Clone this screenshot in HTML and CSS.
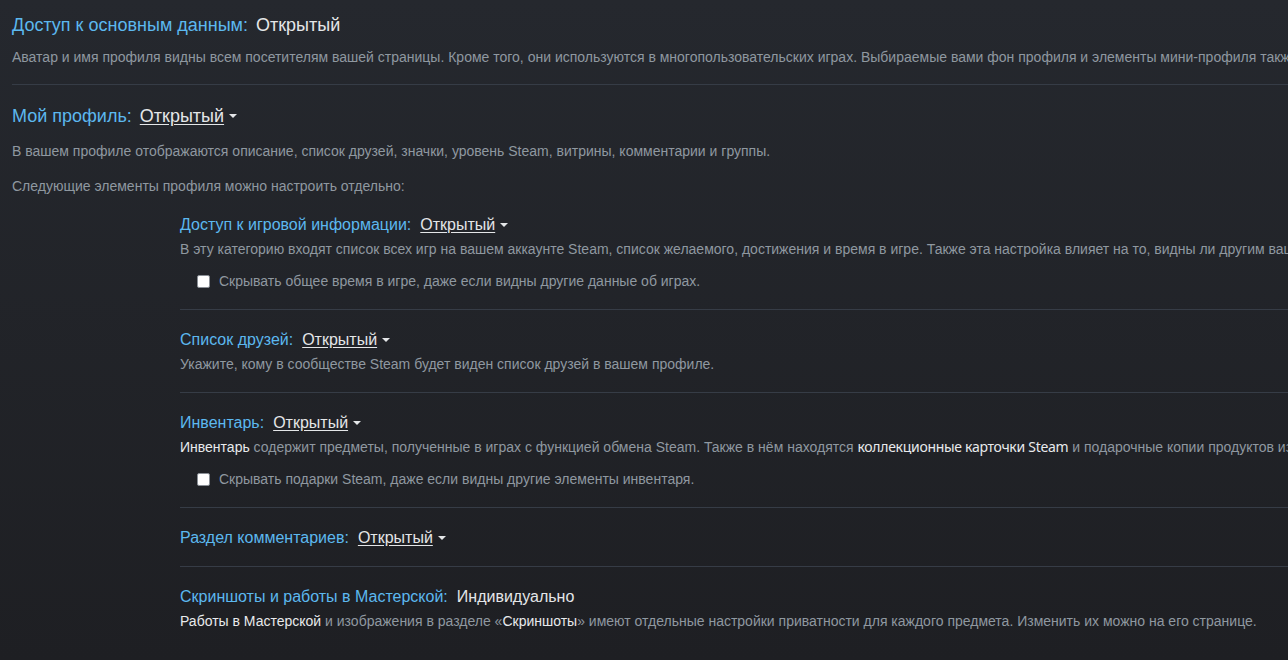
FILE: index.html
```html
<!DOCTYPE html>
<html lang="ru">
<head>
<meta charset="utf-8">
<link rel="stylesheet" href="styles.css">
</head>
<body>
<div class="page">
  <div class="block">
    <div class="title">Доступ к основным данным:<span class="value">Открытый</span></div>
    <div class="desc first">Аватар и имя профиля видны всем посетителям вашей страницы. Кроме того, они используются в многопользовательских играх. Выбираемые вами фон профиля и элементы мини-профиля также видны всем посетителям вашей страницы.</div>
  </div>
  <div class="block last">
    <div class="title">Мой профиль:<span class="link">Открытый</span><span class="arrow"></span></div>
    <div class="desc second">В вашем профиле отображаются описание, список друзей, значки, уровень Steam, витрины, комментарии и группы.</div>
    <div class="desc third">Следующие элементы профиля можно настроить отдельно:</div>
    <div class="subs">
      <div class="sub">
        <div class="subtitle">Доступ к игровой информации:<span class="link">Открытый</span><span class="arrow"></span></div>
        <div class="desc">В эту категорию входят список всех игр на вашем аккаунте Steam, список желаемого, достижения и время в игре. Также эта настройка влияет на то, видны ли другим ваши игровые достижения и статус в сети.</div>
        <label class="check"><span class="box"></span>Скрывать общее время в игре, даже если видны другие данные об играх.</label>
      </div>
      <div class="sub">
        <div class="subtitle">Список друзей:<span class="link">Открытый</span><span class="arrow"></span></div>
        <div class="desc">Укажите, кому в сообществе Steam будет виден список друзей в вашем профиле.</div>
      </div>
      <div class="sub">
        <div class="subtitle">Инвентарь:<span class="link">Открытый</span><span class="arrow"></span></div>
        <div class="desc"><span class="hl">Инвентарь</span> содержит предметы, полученные в играх с функцией обмена Steam. Также в нём находятся <span class="hl alt">коллекционные карточки Steam</span> и подарочные копии продуктов из магазина Steam.</div>
        <label class="check"><span class="box"></span>Скрывать подарки Steam, даже если видны другие элементы инвентаря.</label>
      </div>
      <div class="sub">
        <div class="subtitle">Раздел комментариев:<span class="link">Открытый</span><span class="arrow"></span></div>
      </div>
      <div class="sub noline">
        <div class="subtitle">Скриншоты и работы в Мастерской:<span class="value">Индивидуально</span></div>
        <div class="desc"><span class="hl">Работы в Мастерской</span> и изображения в разделе «<span class="hl">Скриншоты</span>» имеют отдельные настройки приватности для каждого предмета. Изменить их можно на его странице.</div>
      </div>
    </div>
  </div>
</div>
</body>
</html>
```

FILE: styles.css
```css
html, body {
  margin: 0;
  padding: 0;
  height: 100%;
  overflow: hidden;
}
body {
  background: linear-gradient(180deg, #25282e 0%, #1e1f23 100%);
  font-family: "Liberation Sans", Arial, sans-serif;
  color: #8f98a0;
}
.page {
  width: 1900px;
  padding: 15px 0 0 12px;
}
.block {
  border-bottom: 1px solid #363c46;
  padding-bottom: 18px;
}
.block.last {
  border-bottom: none;
  padding-top: 21px;
}
.title {
  font-size: 18px;
  line-height: 20px;
  color: #5cb8ef;
  white-space: nowrap;
}
.subtitle {
  font-size: 16px;
  line-height: 18px;
  color: #5cb8ef;
  white-space: nowrap;
}
.value {
  color: #e4e6e8;
  margin-left: 8px;
}
.link {
  color: #e4e6e8;
  text-decoration: underline;
  text-underline-offset: 2px;
  margin-left: 8px;
}
.subtitle .value, .subtitle .link {
  margin-left: 9px;
}
.arrow {
  display: inline-block;
  width: 0;
  height: 0;
  border-left: 4px solid transparent;
  border-right: 4px solid transparent;
  border-top: 4px solid #e4e6e8;
  margin-left: 5px;
  vertical-align: middle;
  position: relative;
  top: -1px;
}
.desc {
  font-size: 14px;
  line-height: 18px;
  white-space: nowrap;
}
.desc.first { margin-top: 13px; }
.desc.second { margin-top: 16px; }
.desc.third { margin-top: 17px; }
.subs {
  margin-left: 168px;
  margin-top: 3px;
}
.sub {
  padding: 18px 0 19px;
  border-bottom: 1px solid #363c46;
}
.sub + .sub {
  padding-top: 21px;
}
.sub .desc {
  margin-top: 6px;
}
.sub.noline {
  border-bottom: none;
}
.hl {
  color: #e8eaec;
}
.hl.alt {
  font-family: "Noto Sans", "Liberation Sans", sans-serif;
  font-size: 14px;
  letter-spacing: -0.3px;
}
.check {
  display: flex;
  align-items: center;
  margin-top: 14px;
  margin-left: 17px;
  font-size: 14px;
  line-height: 18px;
  white-space: nowrap;
}
.box {
  width: 11px;
  height: 11px;
  background: #ffffff;
  border: 1px solid #8a8f96;
  border-radius: 2px;
  margin-right: 9px;
  flex: none;
}
```
